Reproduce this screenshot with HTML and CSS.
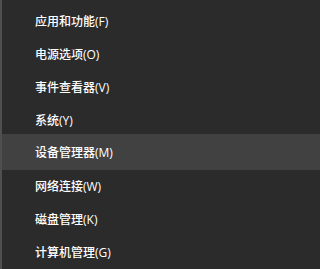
FILE: index.html
```html
<!DOCTYPE html>
<html lang="zh-CN">
<head>
<meta charset="utf-8">
<title>Win+X 菜单</title>
<link rel="stylesheet" href="styles.css">
</head>
<body>
<ul class="menu">
  <li class="item">应用和功能(F)</li>
  <li class="item">电源选项(O)</li>
  <li class="item">事件查看器(V)</li>
  <li class="item">系统(Y)</li>
  <li class="item item-active">设备管理器(M)</li>
  <li class="item">网络连接(W)</li>
  <li class="item">磁盘管理(K)</li>
  <li class="item">计算机管理(G)</li>
</ul>
</body>
</html>
```

FILE: styles.css
```css
html, body {
  margin: 0;
  padding: 0;
  background: #2b2b2b;
  height: 100%;
}
body {
  font-family: "Open Sans", "Noto Sans CJK SC", sans-serif;
  font-size: 12px;
  font-weight: 500;
  color: #ffffff;
  border-left: 2px solid #4f4f4f;
  box-sizing: border-box;
}
.menu {
  list-style: none;
  margin: 0;
  padding: 4px 0 0 0;
  display: flex;
  flex-direction: column;
}
.item {
  height: 33px;
  display: flex;
  align-items: center;
  padding-left: 33px;
  white-space: nowrap;
}
.item-active {
  height: 36px;
  margin: -2px 0 -1px 0;
  background: #414141;
}
```
